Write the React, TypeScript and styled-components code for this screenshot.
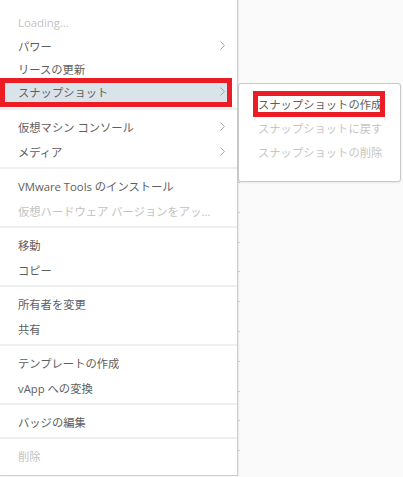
import React from "react";
import styled, { createGlobalStyle, css } from "styled-components";

const Global = createGlobalStyle`
  html, body { margin: 0; padding: 0; background: #f7f7f7; }
  body { font-family: "Open Sans", "Noto Sans CJK JP", sans-serif; }
`;

const Page = styled.div`
  display: flex;
  width: 403px;
  height: 477px;
  overflow: hidden;
  background: #f7f7f7;
`;

const Menu = styled.div`
  width: 237px;
  height: 475px;
  flex: none;
  background: #ffffff;
  border-right: 1px solid #cdcdcd;
  border-bottom: 1px solid #cdcdcd;
  box-shadow: 1px 0 1px rgba(0, 0, 0, 0.06);
  display: flex;
  flex-direction: column;
  position: relative;
  z-index: 1;
`;

const Group = styled.div<{ $top?: number; $bottom?: number; $first?: boolean }>`
  display: flex;
  flex-direction: column;
  padding: ${(p) => p.$top ?? 4}px 5px ${(p) => p.$bottom ?? 3}px 0;
  ${(p) => !p.$first && css`border-top: 2px solid #efefef;`}
`;

const Row = styled.div<{ $h?: number; $disabled?: boolean; $active?: boolean; $marked?: boolean }>`
  position: relative;
  display: flex;
  align-items: center;
  justify-content: space-between;
  height: ${(p) => p.$h ?? 25}px;
  padding: 0 7px 0 18px;
  font-size: 11.3px;
  color: ${(p) => (p.$disabled ? "#c2c2c2" : "#5e5e5e")};
  background: ${(p) => (p.$active ? "#d9e4ea" : "transparent")};
  white-space: nowrap;
  ${(p) =>
    p.$marked &&
    css`
      &::after {
        content: "";
        position: absolute;
        top: -2px;
        bottom: -4px;
        left: 0;
        right: 0;
        border: 5px solid #ec1c24;
        pointer-events: none;
      }
    `}
`;

const Label = styled.span`
  display: block;
  max-width: 196px;
  overflow: hidden;
  text-overflow: ellipsis;
`;

const Chevron = () => (
  <svg width="5" height="9" viewBox="0 0 5 9" style={{ flex: "none" }}>
    <polyline points="0.5,0.5 4.3,4.5 0.5,8.5" fill="none" stroke="#a3a3a3" strokeWidth="1" />
  </svg>
);

const RightPane = styled.div`
  position: relative;
  flex: 1;
  background: #fafafa;
`;

const Ticks = styled.div`
  display: flex;
  flex-direction: column;
  padding-top: 182px;
  gap: 28.8px;
`;

const Tick = styled.div`
  width: 2px;
  height: 1px;
  background: #d6d6d6;
`;

const Submenu = styled.div`
  position: absolute;
  top: 83px;
  left: 0;
  width: 161px;
  height: 89px;
  background: #ffffff;
  border: 1px solid #c9c9c9;
  border-radius: 3px;
  box-shadow: 0 1px 2px rgba(0, 0, 0, 0.08);
  padding: 8px 0 0;
  display: flex;
  flex-direction: column;
  z-index: 2;
`;

const SubRow = styled.div<{ $disabled?: boolean }>`
  display: flex;
  align-items: center;
  height: 24px;
  padding-left: 19px;
  font-size: 11.3px;
  white-space: nowrap;
  color: ${(p) => (p.$disabled ? "#c6c6c6" : "#5e5e5e")};
`;

const Marked = styled.span`
  position: relative;
  display: inline-block;
  line-height: 19px;
  &::after {
    content: "";
    position: absolute;
    top: -4px;
    bottom: -3px;
    left: -5px;
    right: -3px;
    border: 5px solid #ec1c24;
    pointer-events: none;
  }
`;

type Item = { label: string; disabled?: boolean; sub?: boolean; active?: boolean };

const groups: { items: Item[]; first?: boolean }[] = [
  {
    first: true,
    items: [
      { label: "Loading...", disabled: true },
      { label: "パワー", sub: true },
      { label: "リースの更新" },
      { label: "スナップショット", sub: true, active: true },
    ],
  },
  {
    items: [
      { label: "仮想マシン コンソール", sub: true },
      { label: "メディア", sub: true },
    ],
  },
  {
    items: [
      { label: "VMware Tools のインストール" },
      { label: "仮想ハードウェア バージョンをアップグレード", disabled: true },
    ],
  },
  { items: [{ label: "移動" }, { label: "コピー" }] },
  { items: [{ label: "所有者を変更" }, { label: "共有" }] },
  { items: [{ label: "テンプレートの作成" }, { label: "vApp への変換" }] },
  { items: [{ label: "バッジの編集" }] },
  { items: [{ label: "削除", disabled: true }] },
];

const tickCount = 10;

export default function App() {
  return (
    <>
      <Global />
      <Page>
        <Menu>
          {groups.map((g, gi) => (
            <Group key={gi} $first={g.first} $top={g.first ? 11 : 4} $bottom={g.first ? 5 : 3}>
              {g.items.map((it) => (
                <Row
                  key={it.label}
                  $h={g.first ? 23 : 25}
                  $disabled={it.disabled}
                  $active={it.active}
                  $marked={it.active}
                >
                  <Label>{it.label}</Label>
                  {it.sub && <Chevron />}
                </Row>
              ))}
            </Group>
          ))}
        </Menu>
        <RightPane>
          <Ticks>
            {Array.from({ length: tickCount }).map((_, i) => (
              <Tick key={i} />
            ))}
          </Ticks>
          <Submenu>
            <SubRow>
              <Marked>スナップショットの作成</Marked>
            </SubRow>
            <SubRow $disabled>スナップショットに戻す</SubRow>
            <SubRow $disabled>スナップショットの削除</SubRow>
          </Submenu>
        </RightPane>
      </Page>
    </>
  );
}
